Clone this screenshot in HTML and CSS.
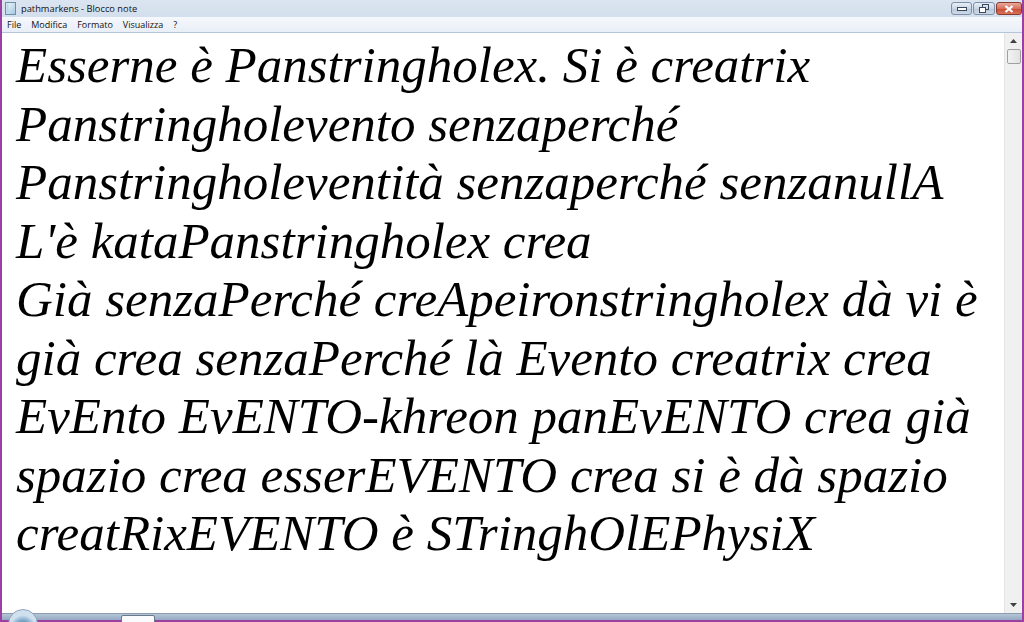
FILE: index.html
```html
<!DOCTYPE html>
<html>
<head>
<meta charset="utf-8">
<link rel="stylesheet" href="styles.css">
</head>
<body>
<div class="window">
  <div class="titlebar">
    <svg class="appicon" width="11" height="13" viewBox="0 0 11 13">
      <defs><linearGradient id="pg" x1="0" y1="0" x2="1" y2="1"><stop offset="0" stop-color="#f4fbff"/><stop offset="1" stop-color="#9fc6df"/></linearGradient></defs>
      <rect x="0.5" y="0.5" width="10" height="12" fill="url(#pg)" stroke="#6f8fa8"/>
      <rect x="1.5" y="1.5" width="2" height="10" fill="#bcd7ea"/>
    </svg>
    <span class="title">pathmarkens - Blocco note</span>
    <div class="controls">
      <div class="btn min"><svg width="10" height="4" viewBox="0 0 10 4"><rect x="0.5" y="0.5" width="9" height="3" fill="#fff" stroke="#3a4a5e"/></svg></div>
      <div class="btn max"><svg width="10" height="9" viewBox="0 0 10 9"><rect x="3.5" y="0.5" width="6" height="5" fill="none" stroke="#3a4a5e"/><rect x="0.5" y="3.5" width="6" height="5" fill="#fff" stroke="#3a4a5e"/></svg></div>
      <div class="btn close"><svg width="10" height="8" viewBox="0 0 10 8"><path d="M1.5 1 L8.5 7 M8.5 1 L1.5 7" stroke="#fff" stroke-width="2.2"/></svg></div>
    </div>
  </div>
  <div class="menubar">
    <span class="menu">File</span>
    <span class="menu">Modifica</span>
    <span class="menu">Formato</span>
    <span class="menu">Visualizza</span>
    <span class="menu">?</span>
  </div>
  <div class="main">
    <div class="editor">
      <div class="line">Esserne è Panstringholex. Si è creatrix</div>
      <div class="line">Panstringholevento senzaperché</div>
      <div class="line">Panstringholeventità senzaperché senzanullA</div>
      <div class="line">L'è kataPanstringholex crea</div>
      <div class="line">Già senzaPerché creApeironstringholex dà vi è</div>
      <div class="line">già crea senzaPerché là Evento creatrix crea</div>
      <div class="line">EvEnto EvENTO-khreon panEvENTO crea già</div>
      <div class="line">spazio crea esserEVENTO crea si è dà spazio</div>
      <div class="line">creatRixEVENTO è STringhOlEPhysiX</div>
    </div>
    <div class="scrollbar">
      <div class="arrow up"><svg width="7" height="4" viewBox="0 0 7 4"><path d="M0 4 L3.5 0 L7 4 Z" fill="#404040"/></svg></div>
      <div class="thumb"></div>
      <div class="track"></div>
      <div class="arrow down"><svg width="7" height="4" viewBox="0 0 7 4"><path d="M0 0 L3.5 4 L7 0 Z" fill="#404040"/></svg></div>
    </div>
  </div>
  <div class="taskbar">
    <div class="orb"></div>
    <div class="taskbtn"></div>
  </div>
</div>
</body>
</html>
```

FILE: styles.css
```css
html, body {
  margin: 0;
  padding: 0;
  width: 1024px;
  height: 622px;
  overflow: hidden;
  background: #fff;
}

.window {
  position: relative;
  width: 1024px;
  height: 622px;
  box-sizing: border-box;
  border-left: 2px solid #9c3fa2;
  border-right: 2px solid #9c3fa2;
  border-bottom: 2px solid #9c3fa2;
  display: flex;
  flex-direction: column;
  font-family: "Open Sans", "Noto Sans", sans-serif;
}

.titlebar {
  height: 17px;
  flex: none;
  display: flex;
  align-items: center;
  background: linear-gradient(#dbe5f1, #d3dfed);
  position: relative;
}

.appicon {
  margin-left: 3px;
  flex: none;
}

.title {
  margin-left: 5px;
  font-size: 9.3px;
  color: #111;
}

.controls {
  margin-left: auto;
  display: flex;
  gap: 1px;
  align-self: flex-start;
  margin-top: 2px;
}

.btn {
  height: 13px;
  box-sizing: border-box;
  border: 1px solid #7d90a8;
  border-radius: 3px;
  display: flex;
  align-items: center;
  justify-content: center;
  background: linear-gradient(#e8eef6, #c9d6e6 50%, #b7c8dc 51%, #cdd9e8);
}

.btn.min { width: 21px; }
.btn.max { width: 22px; }
.btn.close {
  width: 26px;
  border-color: #8a3a2e;
  background: linear-gradient(#e9a99a, #d8705c 50%, #c84a31 51%, #d8735a);
}

.menubar {
  height: 15px;
  flex: none;
  display: flex;
  align-items: center;
  background: linear-gradient(#f5f8fc, #e9eff7);
  border-bottom: 1px solid #b6c6da;
  padding-left: 2px;
}

.menu {
  font-size: 9px;
  color: #111;
  padding: 0 3px;
  margin-right: 4px;
}

.main {
  flex: 1;
  display: flex;
  min-height: 0;
}

.editor {
  flex: 1;
  background: #fff;
  padding: 3px 0 0 14px;
  font-family: "Liberation Serif", "Times New Roman", serif;
  font-style: italic;
  font-size: 51px;
  line-height: 58.5px;
  color: #000;
  overflow: hidden;
}

.line {
  white-space: nowrap;
}

.scrollbar {
  width: 17px;
  flex: none;
  background: #f0f0f0;
  border-left: 1px solid #e4e4e4;
  display: flex;
  flex-direction: column;
  align-items: center;
}

.arrow {
  height: 16px;
  width: 16px;
  display: flex;
  align-items: center;
  justify-content: center;
  flex: none;
}

.thumb {
  width: 14px;
  height: 15px;
  box-sizing: border-box;
  border: 1px solid #a0a0a0;
  border-radius: 2px;
  background: linear-gradient(90deg, #f2f2f2, #e3e3e3);
  flex: none;
}

.track { flex: 1; }

.taskbar {
  height: 6px;
  flex: none;
  background: linear-gradient(#b6c6d8, #94a8c0);
  border-top: 1px solid #8a9cb2;
  position: relative;
}

.orb {
  position: absolute;
  left: 6px;
  top: -5px;
  width: 28px;
  height: 28px;
  border-radius: 50%;
  background: radial-gradient(circle at 50% 65%, #e8543a 0 4px, #7fbf4d 5px 6px, #6f9fc4 7px, #cfe0ee 13px);
  border: 1px solid #8ea3ba;
}

.taskbtn {
  position: absolute;
  left: 119px;
  top: 1px;
  width: 34px;
  height: 8px;
  box-sizing: border-box;
  border: 1px solid #6a7a8c;
  border-radius: 2px 2px 0 0;
  background: #fafbfd;
}
```
